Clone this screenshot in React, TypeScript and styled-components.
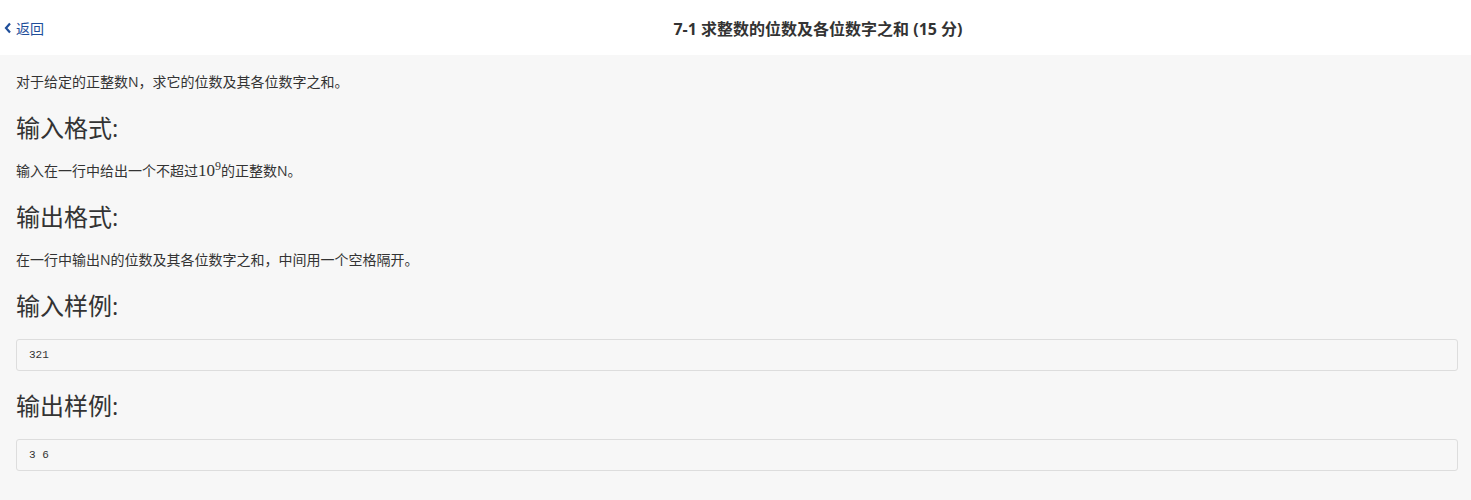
import React from "react";
import styled, { createGlobalStyle } from "styled-components";

const GlobalStyle = createGlobalStyle`
  html, body {
    margin: 0;
    padding: 0;
    background: #f7f7f7;
    color: #333;
    font-family: "Open Sans", "Noto Sans CJK SC", sans-serif;
  }
`;

const samples = [
  { title: "输入样例:", code: "321" },
  { title: "输出样例:", code: "3 6" },
];

export default function App() {
  return (
    <>
      <GlobalStyle />
      <Header>
        <BackLink href="#">
          <Chevron viewBox="0 0 8 12">
            <path d="M6 1.5 L2 6 L6 10.5" />
          </Chevron>
          返回
        </BackLink>
        <Title>7-1 求整数的位数及各位数字之和 (15 分)</Title>
      </Header>
      <Content>
        <Paragraph>对于给定的正整数N，求它的位数及其各位数字之和。</Paragraph>
        <Heading>输入格式:</Heading>
        <Paragraph>
          输入在一行中给出一个不超过
          <MathText>
            10<sup>9</sup>
          </MathText>
          的正整数N。
        </Paragraph>
        <Heading>输出格式:</Heading>
        <Paragraph>在一行中输出N的位数及其各位数字之和，中间用一个空格隔开。</Paragraph>
        {samples.map((s) => (
          <React.Fragment key={s.title}>
            <Heading>{s.title}</Heading>
            <Sample>{s.code}</Sample>
          </React.Fragment>
        ))}
      </Content>
    </>
  );
}

const Header = styled.header`
  display: grid;
  grid-template-columns: 165px 1fr;
  align-items: center;
  height: 55px;
  background: #fff;
`;

const BackLink = styled.a`
  display: flex;
  align-items: center;
  gap: 4px;
  padding-left: 4px;
  font-size: 14px;
  color: #1f4e9a;
  text-decoration: none;
`;

const Chevron = styled.svg`
  width: 8px;
  height: 12px;
  fill: none;
  stroke: #1f4e9a;
  stroke-width: 2.2;
`;

const Title = styled.h1`
  margin: 0;
  text-align: center;
  font-size: 16px;
  font-weight: 700;
  color: #333;
`;

const Content = styled.main`
  padding: 17px 13px 20px 16px;
`;

const Paragraph = styled.p`
  margin: 0 0 10px;
  font-size: 14px;
  line-height: 20px;
`;

const MathText = styled.span`
  font-family: "Liberation Serif", "DejaVu Serif", serif;
  font-size: 17px;

  sup {
    font-size: 12px;
    vertical-align: 6px;
    line-height: 0;
  }
`;

const Sample = styled.pre`
  margin: 0 0 17px;
  padding: 7px 12px;
  border: 1px solid #ddd;
  border-radius: 3px;
  background: #f7f7f7;
  font-family: "Liberation Mono", "DejaVu Sans Mono", monospace;
  font-size: 11px;
  line-height: 16px;
  color: #333;
`;

const Heading = styled.h3`
  margin: 18px 0 15px;
  font-size: 24px;
  font-weight: 400;
  line-height: 36px;

  ${Sample} + & {
    margin-top: 17px;
  }
`;
